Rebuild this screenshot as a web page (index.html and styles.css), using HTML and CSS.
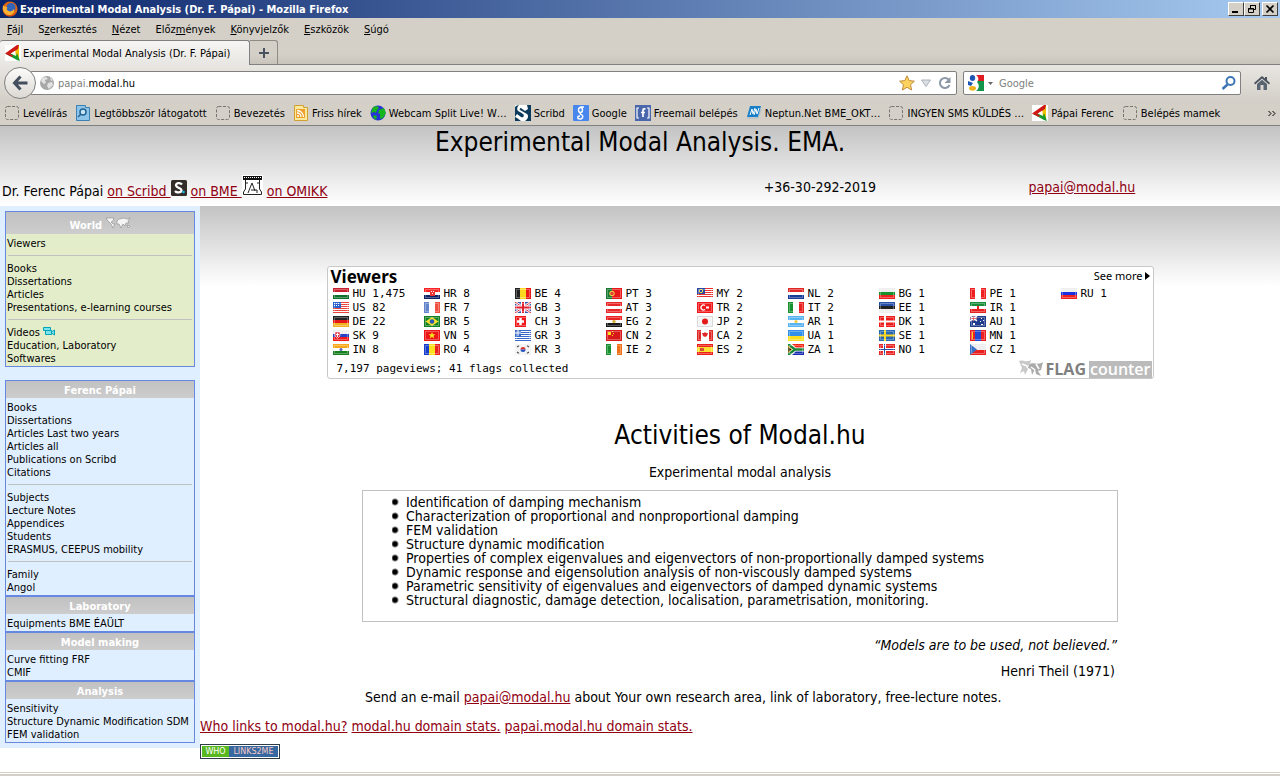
FILE: index.html
```
<!DOCTYPE html>
<html lang="hu">
<head>
<meta charset="utf-8">
<title>Experimental Modal Analysis (Dr. F. Pápai)</title>
<link rel="stylesheet" href="styles.css">
</head>
<body>
<svg class="defs" aria-hidden="true">
  <symbol id="blank" viewBox="0 0 16 16"><rect x="1.5" y="1.500" width="13" height="13" rx="2" fill="none" stroke="#77746e" stroke-dasharray="3 1.500"/></symbol>
  <symbol id="modal" viewBox="0 0 16 16"><path fill="#fff" d="M0 0h16v16H0z"/><path fill="#f2c200" d="m10 3 4-3v14l-3-2z"/><path fill="#159a2c" d="m1 9 4-1 6 3 1-3 3 8-3-1z"/><path fill="#d01818" d="M0 8.500 12 0h2l-1 4-8 5 3 1.500-1 1.500z"/><path fill="#fff" d="m6 8.500 4-2.500v4z"/></symbol>
  <symbol id="fHR" viewBox="0 0 16 11"><path fill="#f22" d="M0 0h16v4H0z"/><path fill="#fff" d="M0 4h16v3H0z"/><path fill="#126" d="M0 7h16v4H0z"/><path fill="#e33" d="M6 2h5v6H6z"/><path fill="#fff" d="M7 3h1v1H7zM9 3h1v1H9zM8 5h1v1H8z"/></symbol>
</svg>

<header class="chrome">
  <div class="titlebar">
    <svg class="fox" viewBox="0 0 16 16"><circle cx="8" cy="8" r="7.500" fill="#e06610"/><circle cx="9" cy="6.500" r="4.500" fill="#3565b8"/><path fill="#f9b233" d="M1 4c1 2 2 1 4 2 1 1-1 2 0 3 2 2 5 2 7-1 1 4-2 6-5 6-4 0-7-4-6-10z"/><path fill="#d33a0c" d="M1 9c1 6 9 8 13 2-2 6-12 6-13-2z"/></svg>
    <span class="window-title">Experimental Modal Analysis (Dr. F. Pápai) - Mozilla Firefox</span>
    <div class="window-buttons">
      <button aria-label="Minimize"><svg viewBox="0 0 12 10"><path fill="#000" d="M2 7h6v2H2z"/></svg></button>
      <button aria-label="Restore"><svg viewBox="0 0 12 10"><path fill="none" stroke="#000" d="M4.500 4V1.500h5v4H8M2.500 4.500h5v4h-5zM4 1.500h6M2 5h6"/></svg></button>
      <button class="close" aria-label="Close"><svg viewBox="0 0 12 10"><path stroke="#000" stroke-width="1.700" d="m2.500 1.500 7 7m0-7-7 7"/></svg></button>
    </div>
  </div>

  <nav class="menubar">
    <button><u>F</u>ájl</button><button>S<u>z</u>erkesztés</button><button><u>N</u>ézet</button><button>Előz<u>m</u>ények</button><button><u>K</u>önyvjelzők</button><button><u>E</u>szközök</button><button><u>S</u>úgó</button>
  </nav>

  <div class="tabs">
    <button class="tab"><svg class="icon"><use href="#modal"/></svg>Experimental Modal Analysis (Dr. F. Pápai)</button>
    <button class="new-tab" aria-label="New tab"><svg viewBox="0 0 10 10"><path fill="#4a5260" d="M4 0h2v4h4v2H6v4H4V6H0V4h4z"/></svg></button>
  </div>

  <div class="toolbar">
    <button class="back" aria-label="Back"><svg viewBox="0 0 16 16"><path fill="none" stroke="#434f5e" stroke-width="3" d="M8.500 1.500 2.500 8l6 6.500M3 8h12.500"/></svg></button>
    <div class="field address">
      <svg class="icon" viewBox="0 0 16 16"><circle cx="8" cy="8" r="7" fill="#a8a8a8"/><path fill="#e2e2e2" d="M3 3l4-1 2 2-3 1 1 3-2 1-3-3zM9 8l4-1 1 3-4 4-2-3zM11 2l3 3-2 1z"/></svg>
      <div class="url" role="textbox" aria-label="Address" contenteditable="true">papai.<b>modal.hu</b></div>
      <svg class="icon star" viewBox="0 0 16 16"><path fill="#fbd35e" stroke="#c08a3c" d="m8 .8 2.200 4.800 5.200.6-3.900 3.500 1.100 5.300L8 12.300 3.400 15l1.100-5.300L.6 6.200l5.200-.6z"/></svg>
      <svg class="icon" viewBox="0 0 16 16"><path fill="#dcdfe4" stroke="#a9b0ba" d="M3.500 5h9L8 11.500z"/></svg>
      <svg class="icon reload" viewBox="0 0 16 16"><path fill="none" stroke="#8d98a6" stroke-width="2" d="M12 5A5 5 0 1 0 12.500 10"/><path fill="#8d98a6" d="M13.500 2v6h-6z"/></svg>
    </div>
    <div class="field search">
      <svg class="icon" viewBox="0 0 16 16"><path fill="#e11b22" d="M8 0h8v6H9z"/><path fill="#12944a" d="M9 6h7v10H8z"/><path fill="#fff" d="M8 0c3 2 3 5 1 7 3 3 2 7-1 9H4V0z"/><ellipse cx="4.500" cy="3" rx="2.700" ry="3" fill="#1d55b4"/><path fill="#1d55b4" d="M0 6l5 2-2 3-3-1z"/><ellipse cx="4.500" cy="13.300" rx="3.500" ry="2.400" fill="#f1b31c"/></svg>
      <svg class="caret" viewBox="0 0 5 3"><path fill="#666" d="M0 0h5L2.500 3z"/></svg>
      <input type="text" placeholder="Google" aria-label="Google">
      <svg class="icon" viewBox="0 0 16 16"><circle cx="9.500" cy="6" r="4" fill="none" stroke="#3d76b5" stroke-width="2"/><path stroke="#3d76b5" stroke-width="2.500" d="m6.500 9.500-5 4.500"/></svg>
    </div>
    <button class="home" aria-label="Home"><svg viewBox="0 0 16 16"><path fill="#48525f" d="M8 1 0 8l1 1.500 7-6 7 6L16 8l-3-2.700V2h-2v1.600z"/><path fill="#5a6572" d="m3 9 5-4.300L13 9v6H9.500v-5h-3v5H3z"/></svg></button>
  </div>

  <nav class="bookmarks">
    <a href="#"><svg class="icon"><use href="#blank"/></svg>Levélírás</a>
    <a href="#"><svg class="icon" viewBox="0 0 16 16"><path fill="#8cc4ea" stroke="#3d7fb2" d="M1.500.5h9v2h4v13h-13z"/><circle cx="8" cy="7" r="3" fill="#c8e6f8" stroke="#246392" stroke-width="1.500"/><path stroke="#246392" stroke-width="1.500" d="m6 9-3 3"/></svg>Legtöbbször látogatott</a>
    <a href="#"><svg class="icon"><use href="#blank"/></svg>Bevezetés</a>
    <a href="#"><svg class="icon" viewBox="0 0 16 16"><path fill="#fce9a0" stroke="#d0a030" d="M1.500.5h9v2h4v13h-13z"/><path fill="#eda02c" d="M3 4h9v9H3z"/><path fill="none" stroke="#fff" stroke-width="1.300" d="M4 8a4 4 0 0 1 4 4M4 5.500A6.500 6.500 0 0 1 10.500 12"/><circle cx="5" cy="11" r="1" fill="#fff"/></svg>Friss hírek</a>
    <a href="#"><svg class="icon" viewBox="0 0 16 16"><circle cx="8" cy="8" r="7.500" fill="#2733d6"/><path fill="#16b51e" d="M3 2l4-1 2 2-2 2-1 3-2-1-3 1zM9 5l5-2 2 5-3 5-3 1V9L8 8zM4 10l3 1-1 4-3-3z"/></svg>Webcam Split Live! W…</a>
    <a href="#"><svg class="icon" viewBox="0 0 16 16"><path fill="#fff" d="M0 0h16v16H0z"/><path fill="#0b3a5c" d="M12 0h4v16h-6c3-2 4-5 2-7L5 5c-1-1 0-2 1-2l4 3 3-2zM0 2c1-1 2-2 4-2C1 3 2 6 5 7l3 2c2 2 0 4-2 3L2 9l-2 3z"/><path fill="#0b3a5c" d="m0 12 2 1 4 3H0z"/></svg>Scribd</a>
    <a href="#"><svg class="icon" viewBox="0 0 16 16"><rect width="16" height="16" rx="1" fill="#4787ed"/><ellipse cx="7.500" cy="5" rx="2" ry="2.500" fill="none" stroke="#fff" stroke-width="1.400"/><path fill="none" stroke="#fff" stroke-width="1.400" d="M7 2h4M8 8c-2 1 0 1 1 2 2 2 0 4-2 4-3 0-3-3 0-3"/></svg>Google</a>
    <a href="#"><svg class="icon" viewBox="0 0 16 16"><path fill="#4a66ad" d="M0 0h16v16H0z"/><path fill="none" stroke="#fff" stroke-width="1.200" d="M4 3H2v10h2M12 3h2v10h-2"/><path fill="none" stroke="#fff" stroke-width="1.700" d="M10.500 4C8.500 3.500 8 4 8 5.500V12M6 7.500h4"/></svg>Freemail belépés</a>
    <a href="#"><svg class="icon" viewBox="0 0 16 16"><path fill="#1780c8" d="M4 1h11l-3 11H1z"/><path fill="none" stroke="#fff" d="M4 10 6 4l1 5 2-6M8 10l2-6 1 5 2-6"/><path fill="none" stroke="#a9bccb" d="M1 13h11l3-9"/></svg>Neptun.Net BME_OKT…</a>
    <a href="#"><svg class="icon"><use href="#blank"/></svg>INGYEN SMS KÜLDÉS …</a>
    <a href="#"><svg class="icon"><use href="#modal"/></svg>Pápai Ferenc</a>
    <a href="#"><svg class="icon"><use href="#blank"/></svg>Belépés mamek</a>
    <button class="more" aria-label="More bookmarks"><svg viewBox="0 0 8 7"><path fill="none" stroke="#000" d="m.5 1 2.500 2.500L.5 6m4-5L7 3.500 4.500 6"/></svg></button>
  </nav>
</header>

<div class="page">
  <header class="masthead">
    <h1>Experimental Modal Analysis. EMA.</h1>
    <div class="contacts">
      <p class="person">Dr. Ferenc Pápai <a href="#">on Scribd <svg class="scribd" viewBox="0 0 16 16"><rect width="16" height="16" rx="1.500" fill="#332d2a"/><path fill="none" stroke="#fff" stroke-width="2.200" d="M11 4.500C9 2 4.500 3 5 5.500S11 8 10.500 10.500 5.500 13 4 11"/><circle cx="12.500" cy="12" r="1.300" fill="#1ab7ea"/></svg></a> <a href="#">on BME <svg class="bme" viewBox="0 0 21 21"><path fill="#fff" d="M0 0h21v21H0z"/><path fill="#111" d="M1 1h19v4H1z"/><path stroke="#fff" stroke-dasharray="1 1" d="M2 2.500h17"/><path fill="none" stroke="#222" d="M3.500 5v9l-2 3v2.500h18V17l-2-3V5M3 8h3M15 8h3M6 18l4-10 3 8M9 15h6v3"/></svg></a> <a href="#">on OMIKK</a></p>
      <p class="phone">+36-30-292-2019</p>
      <p class="mail"><a href="mailto:papai@modal.hu">papai@modal.hu</a></p>
    </div>
  </header>

  <div class="columns">
    <aside class="sidebar">
      <section class="box world">
        <h2>World <svg class="map" viewBox="0 0 25 12"><path fill="#f4f4f4" stroke="#8a8a8a" stroke-width=".6" d="M0 1h8l-1 3-2 1 2 2 2 0-2 4-2-4-3-3zM11 4l2-2 5-1 3 1 3-1-2 3 1 2-3 0-1 3-2-2-2 4-2-4-2 0zM21 8l3 1-2 2z"/></svg></h2>
        <div class="links">
          <a href="#">Viewers</a>
          <hr>
          <a href="#">Books</a><a href="#">Dissertations</a><a href="#">Articles</a><a href="#">Presentations, e-learning courses</a>
          <hr>
          <a href="#">Videos <svg class="camera" viewBox="0 0 12 9"><path fill="#7ce3ef" stroke="#00a3b8" d="M2.500 3.500h6v4h-6zM.5.500h7v3h-7zM8.500 5l3-2v5l-3-2z"/></svg></a><a href="#">Education, Laboratory</a><a href="#">Softwares</a>
        </div>
      </section>
      <section class="box">
        <h2>Ferenc Pápai</h2>
        <div class="links">
          <a href="#">Books</a><a href="#">Dissertations</a><a href="#">Articles Last two years</a><a href="#">Articles all</a><a href="#">Publications on Scribd</a><a href="#">Citations</a>
          <hr>
          <a href="#">Subjects</a><a href="#">Lecture Notes</a><a href="#">Appendices</a><a href="#">Students</a><a href="#">ERASMUS, CEEPUS mobility</a>
          <hr>
          <a href="#">Family</a><a href="#">Angol</a>
        </div>
      </section>
      <section class="box">
        <h2>Laboratory</h2>
        <div class="links"><a href="#">Equipments BME ÉAÜLT</a></div>
      </section>
      <section class="box">
        <h2>Model making</h2>
        <div class="links"><a href="#">Curve fitting FRF</a><a href="#">CMIF</a></div>
      </section>
      <section class="box">
        <h2>Analysis</h2>
        <div class="links"><a href="#">Sensitivity</a><a href="#">Structure Dynamic Modification SDM</a><a href="#">FEM validation</a></div>
      </section>
    </aside>

    <main class="content">
      <section class="counter">
        <div class="counter-head"><h2>Viewers</h2><a href="#">See more<svg viewBox="0 0 5 8"><path d="M0 0l5 4-5 4z"/></svg></a></div>
        <ul class="flags">
          <li><svg viewBox="0 0 16 11"><path fill="#c8202c" d="M0 0h16v4H0z"/><path fill="#fff" d="M0 4h16v3H0z"/><path fill="#107030" d="M0 7h16v4H0z"/></svg>HU 1,475</li>
          <li><svg viewBox="0 0 16 11"><path fill="#fff" d="M0 0h16v11H0z"/><path stroke="#e8443c" d="M0 .5h16M0 2.500h16M0 4.500h16M0 6.500h16M0 8.500h16M0 10.500h16"/><path fill="#2860d0" d="M0 0h8v6H0z"/><path stroke="#fff" stroke-dasharray="1 1" d="M1 1.500h6M1 3.500h6"/></svg>US 82</li>
          <li><svg viewBox="0 0 16 11"><path fill="#222" d="M0 0h16v4H0z"/><path fill="#e41818" d="M0 4h16v3H0z"/><path fill="#f0b020" d="M0 7h16v4H0z"/></svg>DE 22</li>
          <li><svg viewBox="0 0 16 11"><path fill="#eee" d="M0 0h16v4H0z"/><path fill="#2440c8" d="M0 4h16v3H0z"/><path fill="#f01818" d="M0 7h16v4H0z"/><path fill="#e03040" stroke="#fff" stroke-width=".6" d="M2 2h5v4L4.500 8.500 2 6z"/><path stroke="#fff" d="M4.500 3v4M3 4.500h3"/></svg>SK 9</li>
          <li><svg viewBox="0 0 16 11"><path fill="#f8a818" d="M0 0h16v4H0z"/><path fill="#fff" d="M0 4h16v3H0z"/><path fill="#188020" d="M0 7h16v4H0z"/><circle cx="8" cy="5.500" r="1.500" fill="#5868b8"/></svg>IN 8</li>
          <li><svg><use href="#fHR"/></svg>HR 8</li>
          <li><svg viewBox="0 0 16 11"><path fill="#6484cc" d="M0 0h5v11H0z"/><path fill="#fff" d="M5 0h6v11H5z"/><path fill="#f05040" d="M11 0h5v11h-5z"/></svg>FR 7</li>
          <li><svg viewBox="0 0 16 11"><path fill="#128024" d="M0 0h16v11H0z"/><path fill="#f6e030" d="m8 1 6.500 4.500L8 10 1.500 5.500z"/><circle cx="8" cy="5.500" r="2.300" fill="#2858b0"/></svg>BR 5</li>
          <li><svg viewBox="0 0 16 11"><path fill="#ec1414" d="M0 0h16v11H0z"/><path fill="#fce020" d="m8 2 1 2.300h2.500l-2 1.600.8 2.600L8 7 5.700 8.500l.8-2.600-2-1.600H7z"/></svg>VN 5</li>
          <li><svg viewBox="0 0 16 11"><path fill="#183ccc" d="M0 0h5v11H0z"/><path fill="#fce020" d="M5 0h6v11H5z"/><path fill="#ec2020" d="M11 0h5v11h-5z"/></svg>RO 4</li>
          <li><svg viewBox="0 0 16 11"><path fill="#222" d="M0 0h5v11H0z"/><path fill="#fcd820" d="M5 0h6v11H5z"/><path fill="#e81818" d="M11 0h5v11h-5z"/></svg>BE 4</li>
          <li><svg viewBox="0 0 16 11"><path fill="#3450a8" d="M0 0h16v11H0z"/><path stroke="#fff" stroke-width="2.400" d="m0 0 16 11M16 0 0 11M8 0v11M0 5.500h16"/><path stroke="#e02030" d="m0 0 16 11M16 0 0 11"/><path stroke="#fff" stroke-width="4" d="M8 0v11M0 5.500h16"/><path stroke="#e02030" stroke-width="2" d="M8 0v11M0 5.500h16"/></svg>GB 3</li>
          <li><svg viewBox="0 0 16 11"><path fill="#f01818" d="M0 0h11v11H0z"/><path stroke="#fff" stroke-width="2.500" d="M5.500 2v7M2 5.500h7"/></svg>CH 3</li>
          <li><svg viewBox="0 0 16 11"><path fill="#fff" d="M0 0h16v11H0z"/><path stroke="#3868c8" d="M0 .5h16M0 2.500h16M0 4.500h16M0 6.500h16M0 8.500h16M0 10.500h16"/><path fill="#3868c8" d="M0 0h6v6H0z"/><path stroke="#fff" d="M3 0v6M0 3h6"/></svg>GR 3</li>
          <li><svg viewBox="0 0 16 11"><path fill="#f4f4f4" d="M0 0h16v11H0z"/><path fill="#e03030" d="M5.500 5.500a2.500 2.500 0 0 1 5 0z"/><path fill="#2858c0" d="M5.500 5.500a2.500 2.500 0 0 0 5 0z"/><path stroke="#555" stroke-width="1.500" d="m2 3 2-1.500M12 1.500 14 3M2 8l2 1.500M12 9.500 14 8"/></svg>KR 3</li>
          <li><svg viewBox="0 0 16 11"><path fill="#e81818" d="M0 0h16v11H0z"/><path fill="#187830" d="M0 0h6v11H0z"/><circle cx="6" cy="5.500" r="2.300" fill="#e84030" stroke="#f4dc50"/></svg>PT 3</li>
          <li><svg viewBox="0 0 16 11"><path fill="#e82828" d="M0 0h16v11H0z"/><path fill="#fff" d="M0 4h16v3H0z"/></svg>AT 3</li>
          <li><svg viewBox="0 0 16 11"><path fill="#e82020" d="M0 0h16v4H0z"/><path fill="#fff" d="M0 4h16v3H0z"/><path fill="#181818" d="M0 7h16v4H0z"/><circle cx="8" cy="5.500" r="1.700" fill="#d8b440"/></svg>EG 2</li>
          <li><svg viewBox="0 0 16 11"><path fill="#d81818" d="M0 0h16v11H0z"/><path fill="#fce020" d="M2 2h3v3H2zM6 1h1v1H6zM7 3h1v1H7zM6 5h1v1H6z"/></svg>CN 2</li>
          <li><svg viewBox="0 0 16 11"><path fill="#189030" d="M0 0h5v11H0z"/><path fill="#fff" d="M5 0h6v11H5z"/><path fill="#f07018" d="M11 0h5v11h-5z"/></svg>IE 2</li>
          <li><svg viewBox="0 0 16 11"><path fill="#fff" d="M0 0h16v11H0z"/><path stroke="#e83030" d="M0 .5h16M0 2.500h16M0 4.500h16M0 6.500h16M0 8.500h16"/><path fill="#2848a8" d="M0 0h8v6H0z"/><circle cx="4" cy="3" r="1.700" fill="none" stroke="#f4dc40"/></svg>MY 2</li>
          <li><svg viewBox="0 0 16 11"><path fill="#f01818" d="M0 0h16v11H0z"/><path fill="none" stroke="#fff" stroke-width="1.300" d="M8 3.500a2.500 2.500 0 1 0 0 4"/><path fill="#fff" d="M9 4.500h3v2H9z"/></svg>TR 2</li>
          <li><svg class="pale" viewBox="0 0 16 11"><path fill="#f4f4f4" stroke="#d8d8d8" d="M.5.500h15v10H.5z"/><circle cx="8" cy="5.500" r="3" fill="#e41818"/></svg>JP 2</li>
          <li><svg viewBox="0 0 16 11"><path fill="#e02828" d="M0 0h16v11H0z"/><path fill="#fff" d="M4 0h8v11H4z"/><path fill="#e02828" d="m8 2 1 1h2L10 6l-2 1v2-2L6 6 5 3h2z"/></svg>CA 2</li>
          <li><svg viewBox="0 0 16 11"><path fill="#ec2018" d="M0 0h16v11H0z"/><path fill="#fce030" d="M0 3h16v5H0z"/><path fill="#d05030" d="M3 4h4v3H3z"/></svg>ES 2</li>
          <li><svg viewBox="0 0 16 11"><path fill="#e02828" d="M0 0h16v4H0z"/><path fill="#fff" d="M0 4h16v3H0z"/><path fill="#183c98" d="M0 7h16v4H0z"/></svg>NL 2</li>
          <li><svg viewBox="0 0 16 11"><path fill="#189030" d="M0 0h5v11H0z"/><path fill="#fff" d="M5 0h6v11H5z"/><path fill="#e82020" d="M11 0h5v11h-5z"/></svg>IT 2</li>
          <li><svg viewBox="0 0 16 11"><path fill="#58b4f0" d="M0 0h16v11H0z"/><path fill="#fff" d="M0 4h16v3H0z"/><circle cx="8" cy="5.500" r="1.600" fill="#f4cc40"/></svg>AR 1</li>
          <li><svg viewBox="0 0 16 11"><path fill="#3090ec" d="M0 0h16v6H0z"/><path fill="#fce020" d="M0 6h16v5H0z"/></svg>UA 1</li>
          <li><svg viewBox="0 0 16 11"><path fill="#f02818" d="M0 0h16v5H0z"/><path fill="#1830b0" d="M0 6h16v5H0z"/><path fill="none" stroke="#fff" stroke-width="4" d="m1 0 6 5.500L1 11M7 5.500h9"/><path fill="none" stroke="#188838" stroke-width="2.400" d="m0 0 7 5.500L0 11M7 5.500h9"/><path fill="#111" stroke="#f4cc30" stroke-width=".8" d="m0 2.500 4 3-4 3z"/></svg>ZA 1</li>
          <li><svg viewBox="0 0 16 11"><path fill="#eee" d="M0 0h16v4H0z"/><path fill="#18902c" d="M0 4h16v3H0z"/><path fill="#f02020" d="M0 7h16v4H0z"/></svg>BG 1</li>
          <li><svg viewBox="0 0 16 11"><path fill="#2850a8" d="M0 0h16v4H0z"/><path fill="#222" d="M0 4h16v3H0z"/><path fill="#eee" d="M0 7h16v4H0z"/></svg>EE 1</li>
          <li><svg viewBox="0 0 16 11"><path fill="#ec1c1c" d="M0 0h16v11H0z"/><path stroke="#fff" stroke-width="2" d="M6 0v11M0 5.500h16"/></svg>DK 1</li>
          <li><svg viewBox="0 0 16 11"><path fill="#2868b0" d="M0 0h16v11H0z"/><path stroke="#fcd820" stroke-width="2" d="M6 0v11M0 5.500h16"/></svg>SE 1</li>
          <li><svg viewBox="0 0 16 11"><path fill="#e82828" d="M0 0h16v11H0z"/><path stroke="#fff" stroke-width="3" d="M5.500 0v11M0 5.500h16"/><path stroke="#2850a8" d="M5.500 0v11M0 5.500h16"/></svg>NO 1</li>
          <li><svg viewBox="0 0 16 11"><path fill="#f02020" d="M0 0h16v11H0z"/><path fill="#fff" d="M5 0h6v11H5z"/></svg>PE 1</li>
          <li><svg viewBox="0 0 16 11"><path fill="#188c38" d="M0 0h16v4H0z"/><path fill="#fff" d="M0 4h16v3H0z"/><path fill="#e82020" d="M0 7h16v4H0zM7 4h2v3H7z"/></svg>IR 1</li>
          <li><svg viewBox="0 0 16 11"><path fill="#203c8c" d="M0 0h16v11H0z"/><path stroke="#fff" stroke-width="1.400" d="m0 0 7 5M7 0 0 5M3.500 0v5M0 2.500h7"/><path stroke="#d83040" stroke-width=".7" d="M3.500 0v5M0 2.500h7"/><path fill="#fff" d="M3 7h2v2H3zM11 2h1v1h-1zM13 4h1v1h-1zM10 5h1v1h-1zM11 8h2v1h-2z"/></svg>AU 1</li>
          <li><svg viewBox="0 0 16 11"><path fill="#ec2020" d="M0 0h16v11H0z"/><path fill="#2448d0" d="M5 0h6v11H5z"/><path fill="#fccc20" d="M2 2h1v7H2z"/></svg>MN 1</li>
          <li><svg viewBox="0 0 16 11"><path fill="#eee" d="M0 0h16v6H0z"/><path fill="#e82020" d="M0 6h16v5H0z"/><path fill="#3870c8" d="m0 0 7 5.500L0 11z"/></svg>CZ 1</li>
          <li><svg viewBox="0 0 16 11"><path fill="#eee" d="M0 0h16v4H0z"/><path fill="#1c30e0" d="M0 4h16v3H0z"/><path fill="#f02020" d="M0 7h16v4H0z"/></svg>RU 1</li>
        </ul>
        <div class="counter-foot">
          <span class="totals">7,197 pageviews; 41 flags collected</span>
          <span class="brand"><svg viewBox="0 0 24 18"><path fill="#c8c8c8" d="M0 1c4-2 7 2 12-1l-1 4-4 3 2 2-3 6-1-4-4 2 2-5z"/><path fill="#aaa" d="M10 5c4-4 9 1 14-3l-2 8-3 1 3 5-5-2-1-5-3 6-1-6-3-1z"/><path stroke="#fff" stroke-width="1.500" d="m3 4 5 2m4 1 4 3m1-6 3 5"/></svg><b>FLAG</b><i>counter</i></span>
        </div>
      </section>

      <h2 class="activities">Activities of Modal.hu</h2>
      <p class="lead">Experimental modal analysis</p>
      <div class="details">
        <ul class="topics">
          <li>Identification of damping mechanism</li>
          <li>Characterization of proportional and nonproportional damping</li>
          <li>FEM validation</li>
          <li>Structure dynamic modification</li>
          <li>Properties of complex eigenvalues and eigenvectors of non-proportionally damped systems</li>
          <li>Dynamic response and eigensolution analysis of non-viscously damped systems</li>
          <li>Parametric sensitivity of eigenvalues and eigenvectors of damped dynamic systems</li>
          <li>Structural diagnostic, damage detection, localisation, parametrisation, monitoring.</li>
        </ul>
        <p class="quote"><em>“Models are to be used, not believed.”</em></p>
        <p class="quote">Henri Theil (1971)</p>
        <p class="send">Send an e-mail <a href="mailto:papai@modal.hu">papai@modal.hu</a> about Your own research area, link of laboratory, free-lecture notes.</p>
      </div>
      <p class="stats"><a href="#">Who links to modal.hu?</a> <a href="#">modal.hu domain stats.</a> <a href="#">papai.modal.hu domain stats.</a></p>
      <a class="badge" href="#"><span>WHO</span><span>LINKS2ME</span></a>
    </main>
  </div>
</div>
<footer class="statusbar"></footer>
</body>
</html>
```

FILE: styles.css
```
* { box-sizing: border-box; }
body {
  margin: 0;
  min-height: 100vh;
  display: flex;
  flex-direction: column;
  background: #fff;
  color: #000;
  font: 14px/14px "DejaVu Sans Condensed", "DejaVu Sans", sans-serif;
}
h1, h2, p, ul { margin: 0; padding: 0; font-weight: normal; }
ul { list-style: none; }
button, input { font: inherit; color: inherit; background: none; border: 0; padding: 0; margin: 0; }
a { color: #900010; }
svg { flex: none; }
.defs { display: none; }
.icon { width: 16px; height: 16px; }

/* Browser window */
.chrome {
  background: #d4d0c8;
  border-bottom: 1px solid #808080;
  font: 11px/13px Tahoma, "DejaVu Sans Condensed", "DejaVu Sans", sans-serif;
  white-space: nowrap;
}
.titlebar {
  display: flex;
  align-items: center;
  gap: 2px;
  height: 18px;
  padding: 0 2px;
  background: linear-gradient(90deg, #0a246a, #a6caf0);
  color: #fff;
}
.fox { width: 16px; height: 16px; }
.window-title { font-weight: bold; }
.window-buttons { display: flex; margin-left: auto; }
.window-buttons button {
  width: 16px;
  height: 14px;
  padding: 1px;
  background: #d4d0c8;
  border: 1px solid;
  border-color: #fff #404040 #404040 #fff;
}
.window-buttons .close { margin-left: 2px; }
.window-buttons svg { display: block; width: 12px; height: 10px; }
.menubar { display: flex; gap: 15px; height: 22px; padding: 0 7px; align-items: center; }
.tabs {
  display: flex;
  height: 25px;
  border-bottom: 1px solid #808080;
  background: linear-gradient(#d4d0c8 60%, #c8c4bc);
}
.tab {
  display: flex;
  align-items: center;
  gap: 2px;
  width: 250px;
  height: 25px;
  padding: 0 5px;
  background: linear-gradient(#f6f5f3, #e8e6e2);
  border: 1px solid #808080;
  border-width: 1px 1px 0 0;
  border-radius: 3px 3px 0 0;
}
.new-tab {
  display: grid;
  place-items: center;
  width: 28px;
  border: 1px solid #8e8b85;
  border-width: 1px 1px 0 0;
  border-radius: 0 3px 0 0;
}
.new-tab svg { width: 10px; height: 10px; }
.toolbar {
  display: flex;
  align-items: center;
  height: 36px;
  padding: 0 10px 0 4px;
  background: linear-gradient(#e8e6e2, #d4d0c8);
}
.back {
  position: relative;
  display: grid;
  place-items: center;
  flex: none;
  width: 32px;
  height: 32px;
  border: 1px solid #808080;
  border-radius: 50%;
  background: linear-gradient(#fbfbfa, #dcd9d3);
}
.back svg { width: 16px; height: 16px; }
.field {
  display: flex;
  align-items: center;
  height: 24px;
  background: #fff;
  border: 1px solid #808080;
  border-radius: 2px;
}
.address { flex: 1; gap: 3px; margin-left: -6px; padding: 0 3px 0 8px; }
.url { flex: 1; color: #808080; }
.url b { font-weight: normal; color: #000; }
.search { width: 278px; margin: 0 13px 0 6px; padding: 0 3px 0 4px; gap: 4px; }
.search input { flex: 1; min-width: 0; padding-left: 2px; }
.search input::placeholder { color: #808080; opacity: 1; }
.caret { width: 5px; height: 3px; }
.home svg { display: block; width: 16px; height: 16px; }
.bookmarks { display: flex; align-items: center; gap: 8px; height: 24px; padding: 0 4px; }
.bookmarks a { display: flex; align-items: center; gap: 3px; color: #000; text-decoration: none; }
.more { margin-left: auto; }
.more svg { display: block; width: 8px; height: 7px; }

/* Page header */
.page { flex: 1; }
.masthead { height: 80px; padding-top: 1px; background: linear-gradient(#c3c3c3, #fff); }
.masthead h1 { font-size: 26px; line-height: 31px; text-align: center; }
.contacts {
  display: grid;
  grid-template-columns: 59fr 10fr 31fr;
  padding: 17px 0 0 2px;
  white-space: nowrap;
}
.person { line-height: 24px; }
.phone, .mail { padding-top: 5px; text-align: center; }
.scribd { width: 16px; height: 16px; }
.bme { width: 21px; height: 21px; }

/* Sidebar */
.columns { display: flex; align-items: flex-start; }
.sidebar {
  flex: none;
  width: 200px;
  padding: 5px;
  background: #e0efff;
  font: 11px/13px Tahoma, "DejaVu Sans Condensed", "DejaVu Sans", sans-serif;
}
.box { border: 1px solid #6688e0; }
.box h2 {
  height: 17px;
  background: linear-gradient(#c1c1c1, #cdcdcd);
  color: #fff;
  font-size: 11px;
  font-weight: bold;
  line-height: 19px;
  text-align: center;
}
.world { margin-bottom: 13px; background: #e3edca; }
.world h2 { height: 22px; line-height: 28px; }
.map { width: 25px; height: 12px; }
.camera { width: 12px; height: 9px; }
.links { padding: 3px 1px 1px; white-space: nowrap; }
.links a { display: block; height: 13px; color: #000; text-decoration: none; }
.links hr { height: 1px; margin: 5px 1px 6px; border: 0; background: #c0c0c0; }

/* Content */
.content {
  flex: 1;
  min-width: 0;
  padding-top: 60px;
  background: linear-gradient(#c3c3c3, #fff 80px);
}
.counter {
  max-width: 827px;
  height: 113px;
  margin: 0 auto;
  padding: 0 1px 0 3px;
  background: #fff;
  border: 1px solid #c8c8c8;
  border-radius: 3px;
}
.counter-head { display: flex; justify-content: space-between; height: 20px; }
.counter-head h2 { font: bold 17px/20px "Noto Sans", sans-serif; }
.counter-head a { color: #000; font: 11px/17px "Noto Sans", sans-serif; text-decoration: none; }
.counter-head svg { width: 5px; height: 8px; margin: 0 2px; }
.flags {
  display: grid;
  grid-template: repeat(5, 14px) / repeat(9, 1fr);
  grid-auto-flow: column;
  padding-left: 2px;
  font: 11px/14px "DejaVu Sans Mono", monospace;
  white-space: pre;
}
.flags li { display: flex; align-items: flex-start; gap: 4px; }
.flags svg {
  width: 16px;
  height: 11px;
  margin-top: 1px;
  outline: 1px solid rgb(255 255 255 / 30%);
  outline-offset: -2px;
}
.counter-foot { display: flex; justify-content: space-between; align-items: flex-end; height: 21px; }
.totals { padding: 0 0 2px 6px; font: 11px/14px "DejaVu Sans Mono", monospace; }
.brand { display: flex; align-items: center; color: #808080; font: 16px/17px "Open Sans", sans-serif; }
.brand svg { width: 24px; height: 18px; margin-right: 3px; }
.brand i { margin-left: 3px; padding: 0 1px; background: #bbb; color: #fff; font-style: normal; font-weight: 600; }
.activities { margin-top: 41px; font-size: 26px; line-height: 31px; text-align: center; }
.lead { margin-top: 14px; text-align: center; }
.details { width: 70%; margin: 11px auto 0; }
.topics { padding: 4px 0 14px 29px; border: 1px solid #c0c0c0; }
.topics li {
  padding-left: 14px;
  background: radial-gradient(circle at 3px 7px, #000 2px, transparent 4px);
}
.quote { margin-top: 12px; padding-right: 3px; text-align: right; }
.topics + .quote { margin-top: 16px; padding-right: 1px; }
.send { margin-top: 12px; padding-left: 3px; }
.stats { margin-top: 15px; }
.badge {
  display: grid;
  grid-template-columns: 27px 1fr;
  width: 80px;
  height: 15px;
  margin-top: 11px;
  padding: 1px;
  background: #fff;
  border: 1px solid #303c48;
  font: 8px/11px "DejaVu Sans", sans-serif;
  text-align: center;
  text-decoration: none;
}
.badge span { background: #58b820; color: #fff; }
.badge span + span { background: #3868a0; color: #f4c8c8; }

.statusbar { height: 4px; border-top: 1px solid #d4d0c8; background: linear-gradient(#fff 1px, #d4d0c8 1px); }
```
